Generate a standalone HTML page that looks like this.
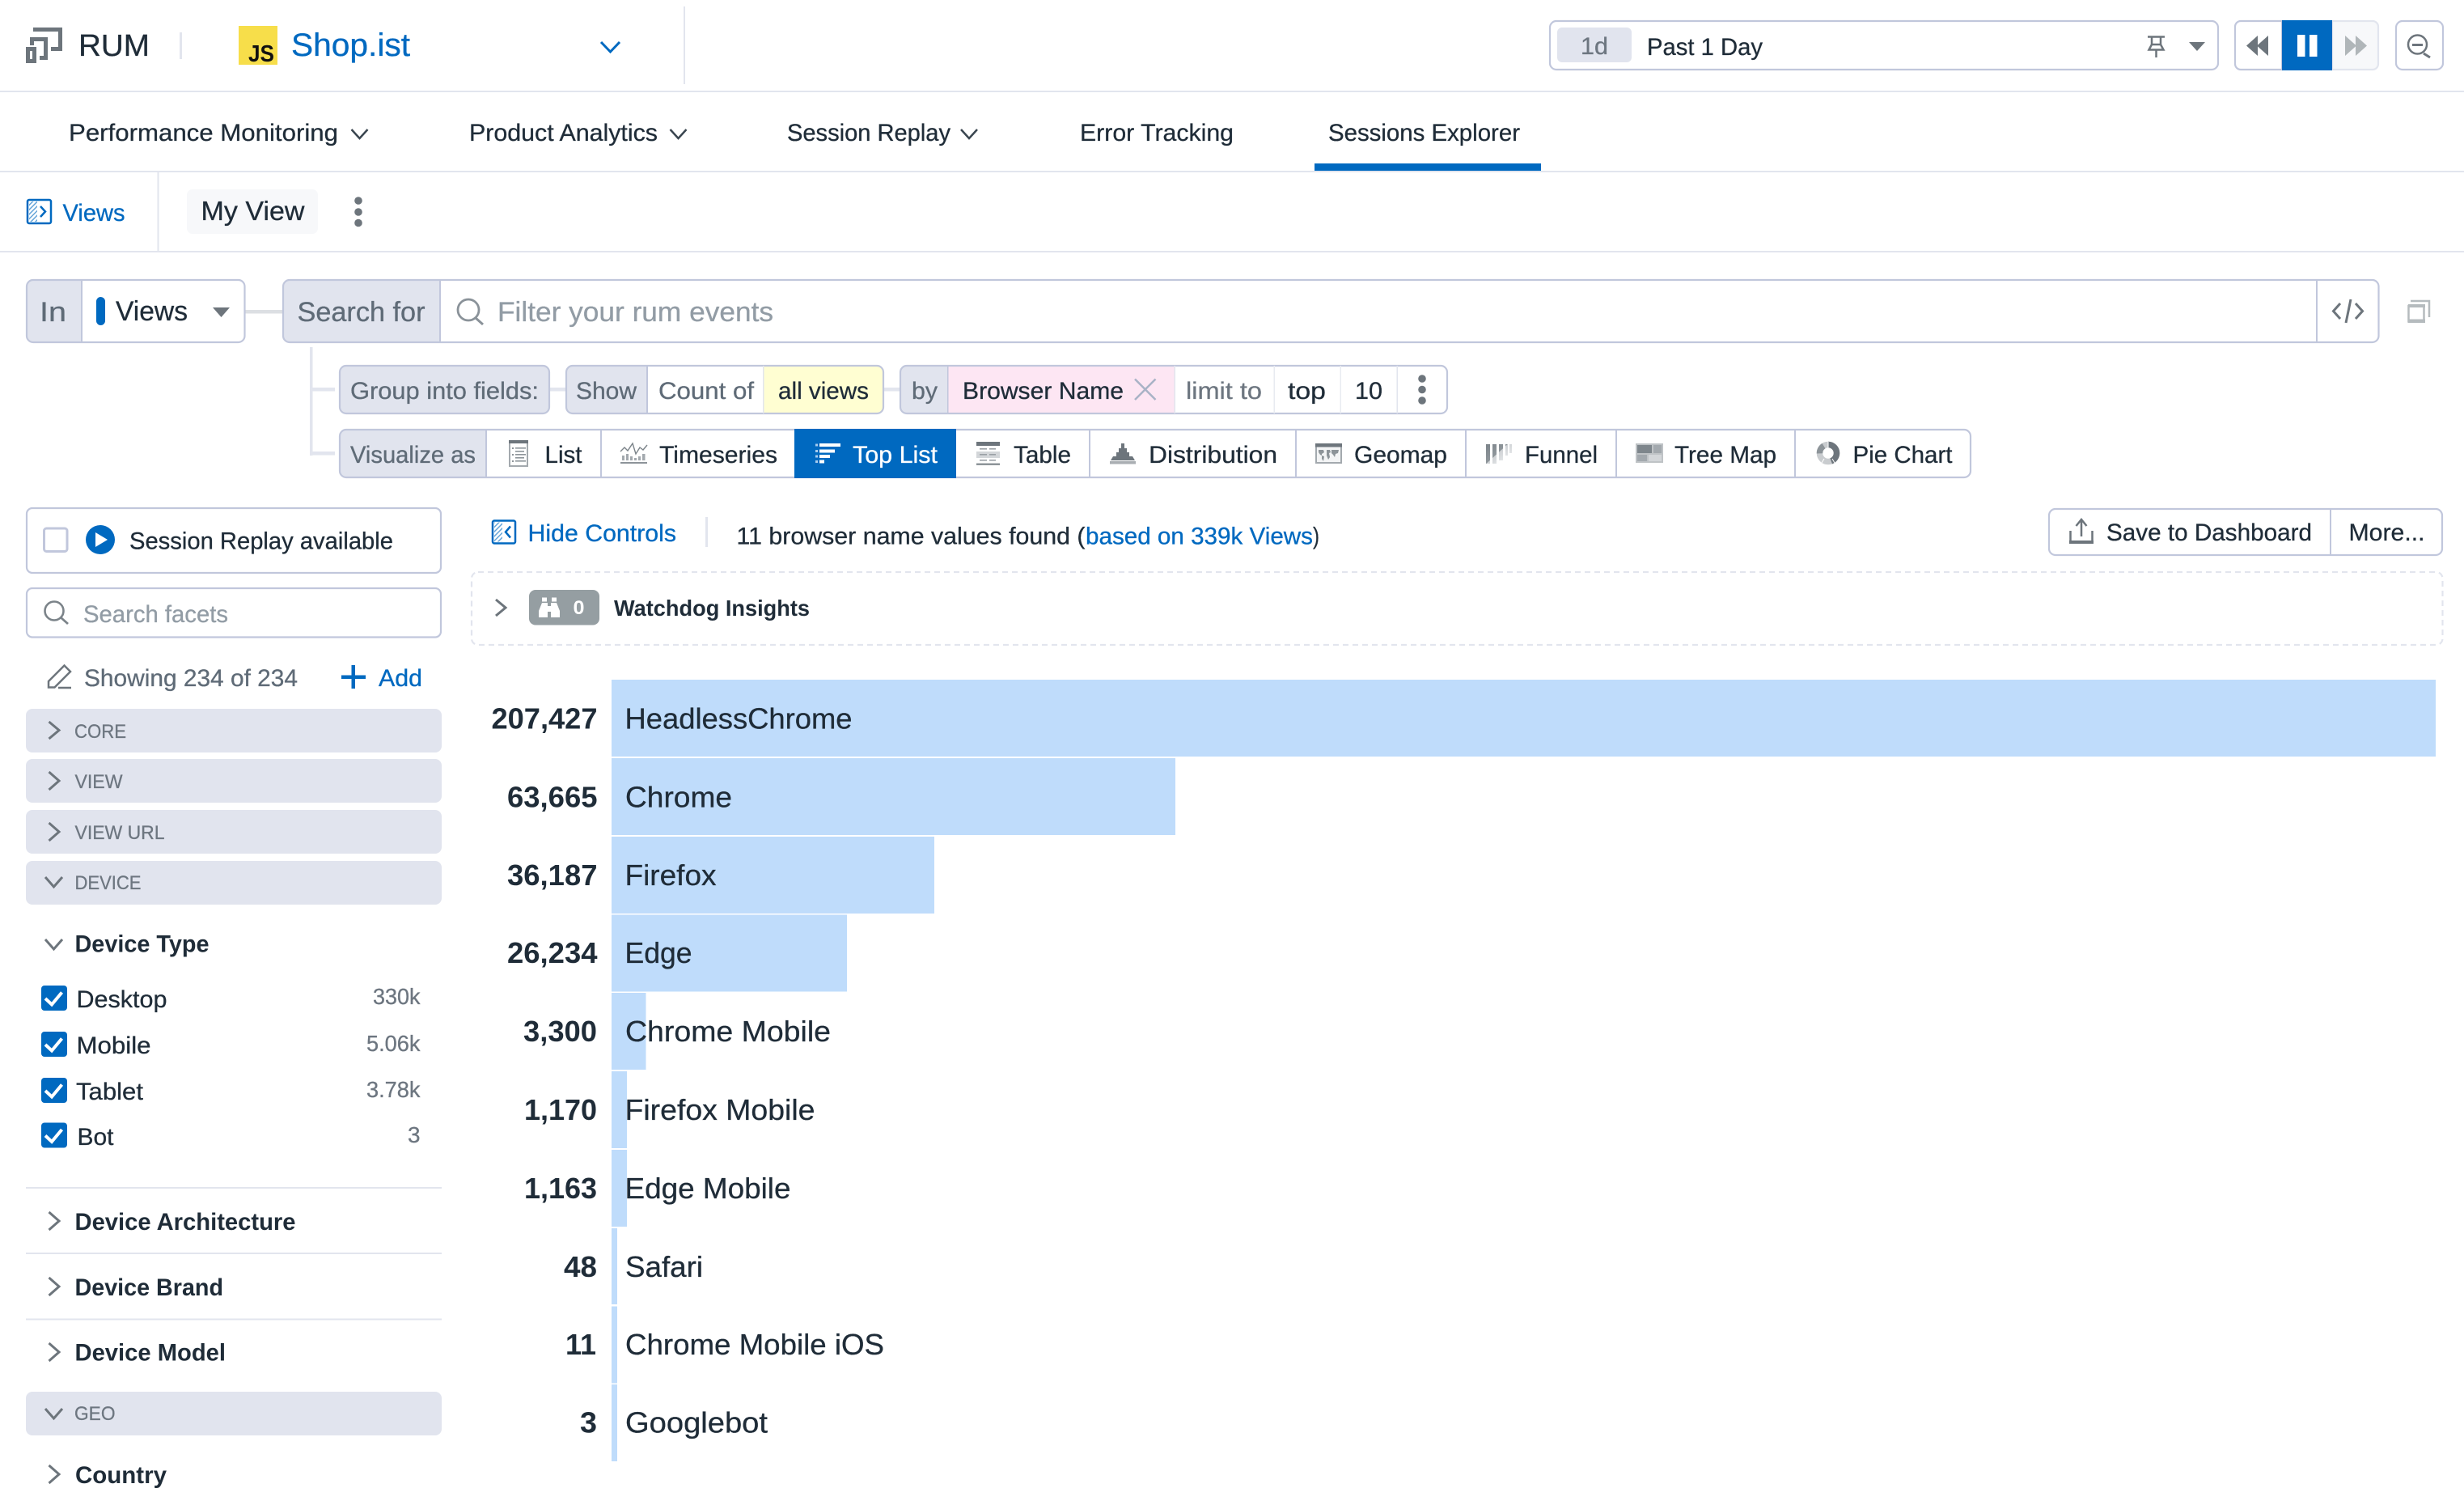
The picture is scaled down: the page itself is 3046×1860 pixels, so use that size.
<!DOCTYPE html>
<html lang="en">
<head>
<meta charset="utf-8">
<title>RUM Sessions Explorer</title>
<style>
html,body{margin:0;padding:0;background:#fff;width:3046px;height:1860px;overflow:hidden}
svg{display:block}
text{font-family:"Liberation Sans",sans-serif;font-size:30px;fill:#1f2c38;stroke:#1f2c38;stroke-width:.3px}
.g{fill:#5f6b77;stroke:#5f6b77}
.l{fill:#6d7680;stroke:#6d7680}
.b{fill:#0069c0;stroke:#0069c0}
.p{fill:#929ca5;stroke:#929ca5}
.w{fill:#fff;stroke:#fff}
.s{font-weight:bold;stroke:none}
.v{font-size:36px;font-weight:bold;stroke:none}
.n{font-size:36px}
.k{font-size:34px}
.c{font-size:24px;fill:#6d7680;stroke:#6d7680}
.ch{fill:none;stroke:#6d757c;stroke-width:3}
.nc{fill:none;stroke:#3a4650;stroke-width:2.5}
.bd{fill:none;stroke:#c1c7dc;stroke-width:2.2}
.fl{fill:#e1e4ee}
.bar{fill:#bfdcfb}
.ln{fill:#e2e5ee}
</style>
</head>
<body>
<svg xmlns="http://www.w3.org/2000/svg" width="3046" height="1860" viewBox="0 0 3046 1860">
<defs>
<pattern id="h" width="4" height="4" patternUnits="userSpaceOnUse" patternTransform="rotate(45)"><rect width="4" height="4" fill="#fff"/><rect width="1.5" height="4" fill="#0069c0" opacity=".6"/></pattern>
<linearGradient id="fg" gradientUnits="userSpaceOnUse" x1="1837" y1="549" x2="1857" y2="571"><stop offset="0" stop-color="#7b8389"/><stop offset=".6" stop-color="#8f969b"/><stop offset=".61" stop-color="#cfd2d5"/><stop offset="1" stop-color="#e4e6e8"/></linearGradient>
</defs>

<!-- top lines -->
<rect x="0" y="112" width="3046" height="2" class="ln"/>
<rect x="0" y="211" width="3046" height="2" class="ln"/>
<rect x="0" y="310" width="3046" height="2" class="ln"/>

<!-- header -->
<g fill="none" stroke="#6d757c" stroke-width="5">
<path d="M41 36.5H74.5V60.5H63"/>
<path d="M39.5 56V48.5H56.5V71.5H49"/>
<rect x="34.5" y="60.5" width="8" height="15"/>
</g>
<text x="97" y="69" style="font-size:38px" textLength="88" lengthAdjust="spacingAndGlyphs">RUM</text>
<rect x="222" y="40" width="3" height="33" class="ln"/>
<rect x="295" y="32" width="48" height="48" fill="#f7de4a"/>
<text x="307" y="76" style="font-size:29px;font-weight:bold;fill:#111;stroke:none" textLength="32" lengthAdjust="spacingAndGlyphs">JS</text>
<text x="360" y="69" class="b" style="font-size:40px" textLength="147" lengthAdjust="spacingAndGlyphs">Shop.ist</text>
<polyline points="743,52 754.5,64 766,52" fill="none" stroke="#0069c0" stroke-width="3"/>
<rect x="845" y="8" width="2" height="96" class="ln"/>

<!-- time picker -->
<rect x="1916" y="26" width="826" height="60" rx="8" class="bd"/>
<rect x="1925" y="34" width="92" height="43" rx="6" class="fl"/>
<text x="1954" y="67" class="l" textLength="34" lengthAdjust="spacingAndGlyphs">1d</text>
<text x="2036" y="68" textLength="143" lengthAdjust="spacingAndGlyphs">Past 1 Day</text>
<g fill="none" stroke="#6d757c" stroke-width="2.5">
<path d="M2655 45.5H2676M2660 46.5V55M2671 46.5V55M2656.5 61.5L2660 55H2671L2674.5 61.5ZM2665.5 62V71"/>
</g>
<polygon points="2706,52 2726,52 2716,63" fill="#6d757c"/>
<path d="M2770 26H2821V86H2770A7 7 0 0 1 2763 79V33A7 7 0 0 1 2770 26Z" class="bd"/>
<path d="M2883 26H2933A7 7 0 0 1 2940 33V79A7 7 0 0 1 2933 86H2883Z" fill="#f7f8fa" stroke="#e2e5ee" stroke-width="2.2"/>
<rect x="2821" y="25" width="62" height="62" fill="#0069c0"/>
<polygon points="2791,44 2777,56.5 2791,69" fill="#6d757c"/>
<polygon points="2804,44 2790,56.5 2804,69" fill="#6d757c"/>
<rect x="2840" y="43" width="9.5" height="27" fill="#fff"/>
<rect x="2855" y="43" width="9.5" height="27" fill="#fff"/>
<polygon points="2899,44 2913,56.5 2899,69" fill="#b0b6b9"/>
<polygon points="2912,44 2926,56.5 2912,69" fill="#b0b6b9"/>
<rect x="2962" y="26" width="58" height="60" rx="8" class="bd"/>
<circle cx="2988.5" cy="55" r="11.5" fill="none" stroke="#6d757c" stroke-width="2.5"/>
<path d="M2982 55.5H2995" stroke="#6d757c" stroke-width="3"/>
<path d="M2996 66L3004 71" stroke="#6d757c" stroke-width="3"/>

<!-- nav -->
<text x="85" y="174" textLength="333" lengthAdjust="spacingAndGlyphs">Performance Monitoring</text>
<polyline points="434.5,160 444.5,171 454.5,160" class="nc"/>
<text x="580" y="174" textLength="233" lengthAdjust="spacingAndGlyphs">Product Analytics</text>
<polyline points="828.5,160 838.5,171 848.5,160" class="nc"/>
<text x="973" y="174" textLength="202" lengthAdjust="spacingAndGlyphs">Session Replay</text>
<polyline points="1188,160 1198,171 1208,160" class="nc"/>
<text x="1335" y="174" textLength="190" lengthAdjust="spacingAndGlyphs">Error Tracking</text>
<text x="1642" y="174" textLength="237" lengthAdjust="spacingAndGlyphs">Sessions Explorer</text>
<rect x="1625" y="202" width="280" height="9" fill="#0069c0"/>

<!-- views row -->
<rect x="34" y="247" width="29" height="29" rx="2" fill="#fff" stroke="#0069c0" stroke-width="2.5"/>
<rect x="36" y="249" width="10" height="25" fill="url(#h)"/>
<polyline points="50,255 56,261.5 50,268" fill="none" stroke="#0069c0" stroke-width="2.5"/>
<text x="77.5" y="273" class="b" textLength="77" lengthAdjust="spacingAndGlyphs">Views</text>
<rect x="194.5" y="212" width="2" height="98" class="ln"/>
<rect x="231" y="234" width="162" height="55" rx="7" fill="#f7f8fa"/>
<text x="248.5" y="272" style="font-size:33px" textLength="128" lengthAdjust="spacingAndGlyphs">My View</text>
<circle cx="443" cy="248" r="4.8" fill="#6d757c"/>
<circle cx="443" cy="262" r="4.8" fill="#6d757c"/>
<circle cx="443" cy="275.5" r="4.8" fill="#6d757c"/>

<!-- search row -->
<rect x="303" y="383" width="46" height="4.5" fill="#dcdfe3"/>
<path d="M101 346H41A8 8 0 0 0 33 354V415A8 8 0 0 0 41 423H101Z" class="fl"/>
<rect x="33" y="346" width="269.5" height="77" rx="8" class="bd"/>
<rect x="100" y="346" width="2" height="77" fill="#c1c7dc"/>
<text x="49" y="397" class="k g" textLength="33" lengthAdjust="spacingAndGlyphs">In</text>
<rect x="119" y="367" width="11" height="35" rx="5.5" fill="#0069c0"/>
<text x="143" y="396" class="k" textLength="89" lengthAdjust="spacingAndGlyphs">Views</text>
<polygon points="263,380 284,380 273.5,392" fill="#6d757c"/>
<path d="M544 346H358A8 8 0 0 0 350 354V415A8 8 0 0 0 358 423H544Z" class="fl"/>
<rect x="350" y="346" width="2590.5" height="77" rx="8" class="bd"/>
<rect x="543" y="346" width="2" height="77" fill="#c1c7dc"/>
<text x="367.5" y="397" class="k g" textLength="158" lengthAdjust="spacingAndGlyphs">Search for</text>
<circle cx="579" cy="383" r="13" fill="none" stroke="#8a9299" stroke-width="2.8"/>
<path d="M588 393L597 401" stroke="#8a9299" stroke-width="3"/>
<text x="615" y="397" class="k p" textLength="341" lengthAdjust="spacingAndGlyphs">Filter your rum events</text>
<rect x="2863" y="346" width="2" height="77" fill="#c1c7dc"/>
<g fill="none" stroke="#6d757c" stroke-width="3">
<polyline points="2893,375 2884.5,384.5 2893,394"/>
<polyline points="2912,375 2920.5,384.5 2912,394"/>
<path d="M2906 370L2900 399"/>
</g>
<g fill="none" stroke="#b5bbbe" stroke-width="2.5">
<rect x="2977.5" y="378" width="19" height="19.5"/>
<path d="M2980 372H3003V392"/>
</g>
<rect x="2977" y="394.5" width="21" height="4.5" fill="#b5bbbe"/>
<rect x="2977" y="376" width="21" height="4" fill="#b5bbbe"/>

<!-- tree connector -->
<rect x="383" y="429" width="3.5" height="134" class="ln"/>
<rect x="383" y="479" width="31" height="4.5" class="ln"/>
<rect x="383" y="558" width="31" height="4.5" class="ln"/>
<rect x="680" y="479" width="19" height="4.5" class="ln"/>
<rect x="1093" y="479" width="19" height="4.5" class="ln"/>

<!-- group row -->
<rect x="420" y="452" width="259" height="59" rx="8" fill="#e1e4ee" stroke="#c1c7dc" stroke-width="2.2"/>
<text x="433" y="493" class="g" textLength="233" lengthAdjust="spacingAndGlyphs">Group into fields:</text>
<path d="M800 452H707A7 7 0 0 0 700 459V504A7 7 0 0 0 707 511H800Z" class="fl"/>
<path d="M944 452H1085A7 7 0 0 1 1092 459V504A7 7 0 0 1 1085 511H944Z" fill="#fffed2"/>
<rect x="700" y="452" width="392" height="59" rx="8" class="bd"/>
<rect x="799" y="452" width="2" height="59" fill="#c1c7dc"/>
<rect x="943" y="452" width="1.5" height="59" fill="#e2e5ee"/>
<text x="712" y="493" class="g" textLength="75" lengthAdjust="spacingAndGlyphs">Show</text>
<text x="814" y="493" class="g" textLength="118" lengthAdjust="spacingAndGlyphs">Count of</text>
<text x="962" y="493" textLength="112" lengthAdjust="spacingAndGlyphs">all views</text>
<path d="M1172 452H1120A7 7 0 0 0 1113 459V504A7 7 0 0 0 1120 511H1172Z" class="fl"/>
<rect x="1172" y="452" width="280" height="59" fill="#fde6f3"/>
<rect x="1113" y="452" width="676" height="59" rx="8" class="bd"/>
<rect x="1171" y="452" width="1.5" height="59" fill="#c1c7dc"/>
<rect x="1451.5" y="452" width="1.5" height="59" fill="#e2e5ee"/>
<rect x="1574.5" y="452" width="1.5" height="59" fill="#e8ebf1"/>
<rect x="1656.5" y="452" width="1.5" height="59" fill="#e8ebf1"/>
<rect x="1726.5" y="452" width="1.5" height="59" fill="#e2e5ee"/>
<text x="1127" y="493" class="g" textLength="32" lengthAdjust="spacingAndGlyphs">by</text>
<text x="1190" y="493" textLength="199" lengthAdjust="spacingAndGlyphs">Browser Name</text>
<path d="M1403 468.5L1428.5 494M1428.5 468.5L1403 494" stroke="#a9b3c6" stroke-width="2.5" fill="none"/>
<text x="1466" y="493" class="l" textLength="94" lengthAdjust="spacingAndGlyphs">limit to</text>
<text x="1592" y="493" textLength="47" lengthAdjust="spacingAndGlyphs">top</text>
<text x="1675" y="493" textLength="34" lengthAdjust="spacingAndGlyphs">10</text>
<circle cx="1758" cy="468" r="4.8" fill="#6d757c"/>
<circle cx="1758" cy="481.5" r="4.8" fill="#6d757c"/>
<circle cx="1758" cy="495" r="4.8" fill="#6d757c"/>

<!-- visualize row -->
<path d="M601 531H428A7 7 0 0 0 421 538V583A7 7 0 0 0 428 590H601Z" class="fl"/>
<rect x="420" y="531" width="2016" height="59" rx="8" class="bd"/>
<rect x="982" y="530" width="200" height="61" fill="#0069c0"/>
<g fill="#c1c7dc">
<rect x="600" y="531" width="2" height="59"/>
<rect x="742" y="531" width="2" height="59"/>
<rect x="1346" y="531" width="2" height="59"/>
<rect x="1601" y="531" width="2" height="59"/>
<rect x="1811" y="531" width="2" height="59"/>
<rect x="1997" y="531" width="2" height="59"/>
<rect x="2218" y="531" width="2" height="59"/>
</g>
<text x="433" y="572" class="g" textLength="155" lengthAdjust="spacingAndGlyphs">Visualize as</text>
<!-- list icon -->
<rect x="630" y="545" width="22" height="31" fill="#fff" stroke="#a3a9ae" stroke-width="2"/>
<rect x="629" y="544" width="24" height="4" fill="#6d757c"/>
<g fill="#8d9499"><rect x="633" y="553" width="2" height="2"/><rect x="637" y="553" width="13" height="1.6"/><rect x="637" y="557" width="11" height="1.6"/><rect x="633" y="561" width="2" height="2"/><rect x="637" y="561" width="13" height="1.6"/><rect x="637" y="565" width="11" height="1.6"/><rect x="633" y="569" width="2" height="2"/><rect x="637" y="569" width="13" height="1.6"/></g>
<text x="673.5" y="572" textLength="46" lengthAdjust="spacingAndGlyphs">List</text>
<!-- timeseries icon -->
<polyline points="767,558 772,553 776,557 782,548 786,561 791,553 795,556 800,550" fill="none" stroke="#7b8389" stroke-width="1.4"/>
<g fill="#a3a9ae"><rect x="769" y="563" width="3" height="6"/><rect x="774" y="561" width="3" height="8"/><rect x="779" y="564" width="3" height="5"/><rect x="784" y="566" width="3" height="3"/><rect x="789" y="564" width="3" height="5"/><rect x="794" y="561" width="3.5" height="8"/></g>
<rect x="767" y="571" width="33" height="2" fill="#8d9499"/>
<text x="815" y="572" textLength="146" lengthAdjust="spacingAndGlyphs">Timeseries</text>
<!-- top list icon -->
<g fill="#fff"><rect x="1013" y="548" width="26" height="4"/><rect x="1013" y="555.5" width="19" height="4"/><rect x="1013" y="562" width="13" height="4"/><rect x="1013" y="568.5" width="6" height="4"/></g>
<g fill="#a9cdee"><rect x="1008" y="548.5" width="3" height="3"/><rect x="1008" y="556" width="3" height="3"/><rect x="1008" y="562.5" width="3" height="3"/><rect x="1008" y="569" width="3" height="3"/></g>
<text x="1054" y="572" class="w" textLength="105" lengthAdjust="spacingAndGlyphs">Top List</text>
<!-- table icon -->
<rect x="1207" y="546" width="29" height="5" fill="#6d757c"/>
<rect x="1207" y="558" width="29" height="8" fill="#d3d6d9"/>
<g fill="#9aa0a5"><rect x="1211" y="554" width="9" height="1.6"/><rect x="1223" y="554" width="8" height="1.6"/><rect x="1211" y="561" width="9" height="1.6"/><rect x="1223" y="561" width="8" height="1.6"/><rect x="1211" y="568" width="9" height="1.6"/><rect x="1223" y="568" width="8" height="1.6"/></g>
<rect x="1207" y="572.5" width="29" height="2.5" fill="#8d9499"/>
<text x="1253" y="572" textLength="71" lengthAdjust="spacingAndGlyphs">Table</text>
<!-- distribution icon -->
<path d="M1386 548H1390V554H1393V559H1396V564H1400L1403 569H1373L1376 564H1380V559H1383V554H1386Z" fill="#6d757c"/>
<rect x="1372" y="570" width="32" height="3.5" fill="#a9aeb2"/>
<text x="1420" y="572" textLength="159" lengthAdjust="spacingAndGlyphs">Distribution</text>
<!-- geomap icon -->
<rect x="1627" y="549" width="31" height="23" fill="#f3f4f5" stroke="#a3a9ae" stroke-width="2"/>
<rect x="1626" y="548" width="33" height="4.5" fill="#6d757c"/>
<g fill="#8d9499"><path d="M1630 556h6l1 3-3 2v2l-2-1-2-3z"/><path d="M1634 563l3 1-1 6-2-3z"/><path d="M1640 556h4l1 3-2 1 1 5-2 3-2-5z"/><path d="M1646 556h9l-1 4-3 1-1 4-2-3-2-2z"/></g>
<text x="1674" y="572" textLength="115" lengthAdjust="spacingAndGlyphs">Geomap</text>
<!-- funnel icon -->
<g fill="url(#fg)"><rect x="1837" y="549" width="5" height="24"/><rect x="1845" y="549" width="5" height="24"/><rect x="1853" y="549" width="5" height="20"/><rect x="1861" y="549" width="3" height="14"/><rect x="1866" y="549" width="3" height="11"/></g>
<text x="1885" y="572" textLength="90" lengthAdjust="spacingAndGlyphs">Funnel</text>
<!-- tree map icon -->
<rect x="2022" y="548" width="34" height="24" fill="#bfc3c6"/>
<rect x="2024" y="550" width="18" height="10" fill="#7e868c"/>
<rect x="2044" y="550" width="10" height="10" fill="#a3a9ae"/>
<rect x="2024" y="562" width="12" height="8" fill="#a3a9ae"/>
<rect x="2038" y="562" width="16" height="8" fill="#d3d6d9"/>
<text x="2070" y="572" textLength="126" lengthAdjust="spacingAndGlyphs">Tree Map</text>
<!-- pie icon -->
<circle cx="2260" cy="560" r="10.5" fill="none" stroke="#c9cccf" stroke-width="7.5"/>
<circle cx="2260" cy="560" r="10.5" fill="none" stroke="#6d757c" stroke-width="7.5" stroke-dasharray="29 37" transform="rotate(-90 2260 560)"/>
<circle cx="2260" cy="560" r="10.5" fill="none" stroke="#8d9499" stroke-width="7.5" stroke-dasharray="11 55" transform="rotate(178 2260 560)"/>
<path d="M2260 546V554M2252 572l3-5M2268 572l-3-5" stroke="#fff" stroke-width="1"/>
<text x="2290.5" y="572" textLength="123" lengthAdjust="spacingAndGlyphs">Pie Chart</text>

<!-- session replay box -->
<rect x="33" y="628" width="512" height="80" rx="7" fill="none" stroke="#c1c7dc" stroke-width="2.2"/>
<rect x="54.5" y="653" width="28.5" height="28.5" rx="3" fill="#fff" stroke="#c1c7dc" stroke-width="3"/>
<circle cx="124" cy="667" r="18" fill="#0069c0"/>
<polygon points="118,658 133,667 118,676" fill="#fff"/>
<text x="160" y="678.5" textLength="326" lengthAdjust="spacingAndGlyphs">Session Replay available</text>

<!-- search facets -->
<rect x="33" y="727" width="512" height="60.5" rx="7" fill="none" stroke="#c1c7dc" stroke-width="2.2"/>
<circle cx="67" cy="755" r="11.5" fill="none" stroke="#7b8389" stroke-width="2.6"/>
<path d="M75.5 763.5L84 771" stroke="#7b8389" stroke-width="2.8"/>
<text x="103" y="769" class="p" textLength="179" lengthAdjust="spacingAndGlyphs">Search facets</text>

<!-- showing -->
<path d="M60 849.5V842L79.5 822.5L87 830L67.5 849.5Z" fill="none" stroke="#6d757c" stroke-width="2.5"/>
<path d="M72 850H88" stroke="#6d757c" stroke-width="2.5"/>
<text x="104" y="848" class="g" textLength="264" lengthAdjust="spacingAndGlyphs">Showing 234 of 234</text>
<rect x="422" y="834.5" width="30" height="4.5" fill="#0069c0"/>
<rect x="434.5" y="822" width="4.5" height="29" fill="#0069c0"/>
<text x="468" y="848" class="b" textLength="54" lengthAdjust="spacingAndGlyphs">Add</text>

<!-- section bars -->
<rect x="32" y="876" width="514" height="54" rx="8" class="fl"/>
<polyline points="60.5,892 73,902.5 60.5,913" class="ch"/>
<text x="92" y="912" class="c" textLength="64" lengthAdjust="spacingAndGlyphs">CORE</text>
<rect x="32" y="938" width="514" height="54" rx="8" class="fl"/>
<polyline points="60.5,954 73,965 60.5,976" class="ch"/>
<text x="92.5" y="974" class="c" textLength="59" lengthAdjust="spacingAndGlyphs">VIEW</text>
<rect x="32" y="1001" width="514" height="54" rx="8" class="fl"/>
<polyline points="60.5,1017 73,1028 60.5,1039" class="ch"/>
<text x="92.5" y="1037" class="c" textLength="111" lengthAdjust="spacingAndGlyphs">VIEW URL</text>
<rect x="32" y="1064" width="514" height="54" rx="8" class="fl"/>
<polyline points="56,1084 66.5,1096 77,1084" class="ch"/>
<text x="92.5" y="1099" class="c" textLength="82" lengthAdjust="spacingAndGlyphs">DEVICE</text>

<!-- device type -->
<polyline points="56,1161 66.5,1173 77,1161" class="ch"/>
<text x="92.5" y="1176.5" class="s" textLength="166" lengthAdjust="spacingAndGlyphs">Device Type</text>
<g>
<rect x="51" y="1218" width="32" height="31" rx="4" fill="#0069c0"/>
<polyline points="56,1234 64,1241.5 76.5,1226.5" fill="none" stroke="#fff" stroke-width="4"/>
<text x="94.5" y="1245" textLength="112" lengthAdjust="spacingAndGlyphs">Desktop</text>
<text x="461" y="1241" class="l" style="font-size:28px" textLength="58.5" lengthAdjust="spacingAndGlyphs">330k</text>
<rect x="51" y="1275" width="32" height="31" rx="4" fill="#0069c0"/>
<polyline points="56,1291 64,1298.5 76.5,1283.5" fill="none" stroke="#fff" stroke-width="4"/>
<text x="94.5" y="1302" textLength="92" lengthAdjust="spacingAndGlyphs">Mobile</text>
<text x="453" y="1299" class="l" style="font-size:28px" textLength="66.5" lengthAdjust="spacingAndGlyphs">5.06k</text>
<rect x="51" y="1332" width="32" height="31" rx="4" fill="#0069c0"/>
<polyline points="56,1348 64,1355.5 76.5,1340.5" fill="none" stroke="#fff" stroke-width="4"/>
<text x="94" y="1359" textLength="83" lengthAdjust="spacingAndGlyphs">Tablet</text>
<text x="453" y="1356" class="l" style="font-size:28px" textLength="66.5" lengthAdjust="spacingAndGlyphs">3.78k</text>
<rect x="51" y="1387.5" width="32" height="31" rx="4" fill="#0069c0"/>
<polyline points="56,1403.5 64,1411 76.5,1396" fill="none" stroke="#fff" stroke-width="4"/>
<text x="95.5" y="1415" textLength="45" lengthAdjust="spacingAndGlyphs">Bot</text>
<text x="504" y="1412" class="l" style="font-size:28px" textLength="15.5" lengthAdjust="spacingAndGlyphs">3</text>
</g>

<rect x="32" y="1467" width="514" height="2" class="ln"/>
<polyline points="60.5,1498 73,1509 60.5,1520" class="ch"/>
<text x="92.5" y="1520" class="s" textLength="273" lengthAdjust="spacingAndGlyphs">Device Architecture</text>
<rect x="32" y="1548" width="514" height="2" class="ln"/>
<polyline points="60.5,1579 73,1590 60.5,1601" class="ch"/>
<text x="92.5" y="1601" class="s" textLength="183.5" lengthAdjust="spacingAndGlyphs">Device Brand</text>
<rect x="32" y="1629.5" width="514" height="2" class="ln"/>
<polyline points="60.5,1660 73,1671 60.5,1682" class="ch"/>
<text x="92.5" y="1681.5" class="s" textLength="186.5" lengthAdjust="spacingAndGlyphs">Device Model</text>
<rect x="32" y="1720" width="514" height="54" rx="8" class="fl"/>
<polyline points="56,1741 66.5,1753 77,1741" class="ch"/>
<text x="92" y="1755" class="c" textLength="50.5" lengthAdjust="spacingAndGlyphs">GEO</text>
<polyline points="60.5,1811 73,1822 60.5,1833" class="ch"/>
<text x="93" y="1833" class="s" textLength="113" lengthAdjust="spacingAndGlyphs">Country</text>

<!-- hide controls -->
<rect x="609" y="643.5" width="28" height="28" rx="2" fill="#fff" stroke="#0069c0" stroke-width="2.5"/>
<rect x="611" y="645.5" width="10" height="24" fill="url(#h)"/>
<polyline points="631,650.5 625,657.5 631,664.5" fill="none" stroke="#0069c0" stroke-width="2.5"/>
<text x="652.5" y="669" class="b" textLength="183.5" lengthAdjust="spacingAndGlyphs">Hide Controls</text>
<rect x="872" y="639" width="3" height="37" class="ln"/>
<text x="910.5" y="672.5" textLength="431" lengthAdjust="spacingAndGlyphs">11 browser name values found (</text>
<text x="1342" y="672.5" class="b" textLength="281" lengthAdjust="spacingAndGlyphs">based on 339k Views</text>
<text x="1623" y="672.5" textLength="8" lengthAdjust="spacingAndGlyphs">)</text>

<!-- save to dashboard -->
<rect x="2533" y="629" width="486" height="57" rx="8" class="bd"/>
<rect x="2880" y="629" width="2" height="57" fill="#c1c7dc"/>
<path d="M2559.5 656V670.5H2586.5V656" fill="none" stroke="#6d757c" stroke-width="2.5"/>
<rect x="2558" y="668" width="30" height="4" fill="#6d757c"/>
<path d="M2573 642V663M2566.5 650L2573 642L2579.5 650" fill="none" stroke="#6d757c" stroke-width="2.5"/>
<text x="2604" y="668" textLength="254" lengthAdjust="spacingAndGlyphs">Save to Dashboard</text>
<text x="2903.5" y="668" textLength="94" lengthAdjust="spacingAndGlyphs">More...</text>

<!-- watchdog -->
<rect x="583" y="707" width="2436.5" height="90" rx="8" fill="none" stroke="#e2e5ee" stroke-width="2.2" stroke-dasharray="7 5"/>
<polyline points="613,741 625,751 613,761" class="ch"/>
<rect x="654" y="729" width="87" height="43.5" rx="8" fill="#959ea2"/>
<path d="M670 745H677V763H666V755ZM681 745H688L692 755V763H681ZM677 749H681V756H677ZM670 738.5H676V743.5H670ZM682 738.5H688V743.5H682Z" fill="#fff"/>
<text x="708.5" y="759" class="w s" style="font-size:24px" textLength="14" lengthAdjust="spacingAndGlyphs">0</text>
<text x="759" y="761" class="s" style="font-size:28px" textLength="242" lengthAdjust="spacingAndGlyphs">Watchdog Insights</text>

<!-- bars -->
<rect x="756" y="840" width="2255" height="95" class="bar"/>
<rect x="756" y="937" width="697" height="95" class="bar"/>
<rect x="756" y="1034" width="399" height="95" class="bar"/>
<rect x="756" y="1130.5" width="291" height="95" class="bar"/>
<rect x="756" y="1227" width="42.5" height="95" class="bar"/>
<rect x="756" y="1324" width="19" height="95" class="bar"/>
<rect x="756" y="1421" width="19" height="95" class="bar"/>
<rect x="756" y="1518" width="7" height="94" class="bar"/>
<rect x="756" y="1614.5" width="7" height="95" class="bar"/>
<rect x="756" y="1711" width="7" height="95" class="bar"/>

<text x="607.5" y="900.5" class="v" textLength="131" lengthAdjust="spacingAndGlyphs">207,427</text>
<text x="772.5" y="900.5" class="n" textLength="281" lengthAdjust="spacingAndGlyphs">HeadlessChrome</text>
<text x="627" y="997.5" class="v" textLength="111.5" lengthAdjust="spacingAndGlyphs">63,665</text>
<text x="773" y="997.5" class="n" textLength="132" lengthAdjust="spacingAndGlyphs">Chrome</text>
<text x="627" y="1094" class="v" textLength="111.5" lengthAdjust="spacingAndGlyphs">36,187</text>
<text x="772.5" y="1094" class="n" textLength="113" lengthAdjust="spacingAndGlyphs">Firefox</text>
<text x="627" y="1190" class="v" textLength="111.5" lengthAdjust="spacingAndGlyphs">26,234</text>
<text x="772.5" y="1190" class="n" textLength="83" lengthAdjust="spacingAndGlyphs">Edge</text>
<text x="647" y="1287" class="v" textLength="91" lengthAdjust="spacingAndGlyphs">3,300</text>
<text x="773" y="1287" class="n" textLength="254" lengthAdjust="spacingAndGlyphs">Chrome Mobile</text>
<text x="648" y="1384" class="v" textLength="90" lengthAdjust="spacingAndGlyphs">1,170</text>
<text x="772.5" y="1384" class="n" textLength="235" lengthAdjust="spacingAndGlyphs">Firefox Mobile</text>
<text x="648" y="1481" class="v" textLength="90" lengthAdjust="spacingAndGlyphs">1,163</text>
<text x="772.5" y="1481" class="n" textLength="205" lengthAdjust="spacingAndGlyphs">Edge Mobile</text>
<text x="697" y="1578" class="v" textLength="41" lengthAdjust="spacingAndGlyphs">48</text>
<text x="773" y="1578" class="n" textLength="96" lengthAdjust="spacingAndGlyphs">Safari</text>
<text x="699" y="1674" class="v" textLength="38" lengthAdjust="spacingAndGlyphs">11</text>
<text x="773" y="1674" class="n" textLength="320" lengthAdjust="spacingAndGlyphs">Chrome Mobile iOS</text>
<text x="717" y="1770.5" class="v" textLength="21" lengthAdjust="spacingAndGlyphs">3</text>
<text x="773" y="1770.5" class="n" textLength="176" lengthAdjust="spacingAndGlyphs">Googlebot</text>
</svg>
</body>
</html>
